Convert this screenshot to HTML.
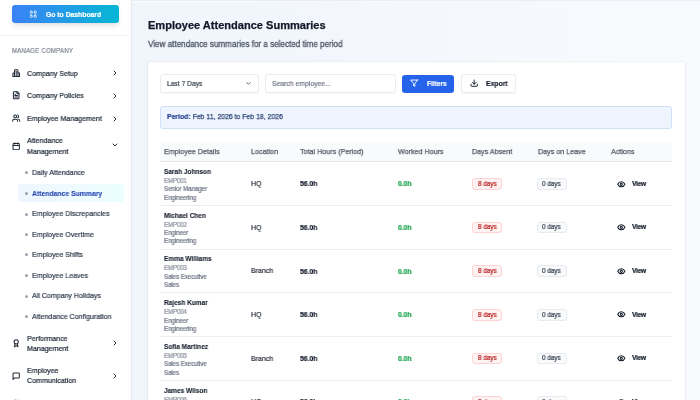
<!DOCTYPE html>
<html><head><meta charset="utf-8"><style>
html,body{margin:0;padding:0;}
body{width:700px;height:400px;overflow:hidden;position:relative;font-family:"Liberation Sans",sans-serif;background:linear-gradient(90deg,#eff5fc 0%,#f3f7fd 50%,#f8fafd 100%);}
.t{position:absolute;white-space:nowrap;will-change:transform;}
.ic{position:absolute;display:block;}
.box{position:absolute;box-sizing:border-box;}
</style></head><body>
<div class="box" style="left:0;top:0;width:131.6px;height:400px;background:#fff;border-right:1px solid #e6e9ef;"></div>
<div class="box" style="left:12px;top:5px;width:106.5px;height:17.7px;border-radius:3px;background:linear-gradient(90deg,#3b82f6,#06b6d4);box-shadow:0 4px 6px -1px rgba(0,0,0,0.09),0 2px 4px -2px rgba(0,0,0,0.09);"></div>
<svg class="ic" style="left:29.00px;top:9.70px;width:8.6px;height:8.6px;" viewBox="0 0 24 24" fill="none" stroke="#fff" stroke-width="2.3" stroke-linecap="round" stroke-linejoin="round"><rect x="3.5" y="3.5" width="6" height="6" rx="2.2"/><rect x="14.5" y="3.5" width="6" height="6" rx="2.2"/><rect x="14.5" y="14.5" width="6" height="6" rx="2.2"/><rect x="3.5" y="14.5" width="6" height="6" rx="2.2"/></svg>
<div class="t" style="left:45.60px;top:10.99px;font-size:6.8px;line-height:8.5px;color:#fff;font-weight:bold;-webkit-text-stroke:0.18px #fff;">Go to Dashboard</div>
<div class="box" style="left:0;top:35px;width:128px;height:1px;background:#f1f2f5;"></div>
<div class="box" style="left:132px;top:0;width:568px;height:1px;background:#ebeef5;"></div>
<div class="box" style="left:132px;top:1px;width:568px;height:2px;background:#f6f9fe;"></div>
<div class="t" style="left:12.40px;top:47.10px;font-size:6.9px;line-height:8.62px;color:#6b7280;font-weight:normal;-webkit-text-stroke:0.12px #6b7280;letter-spacing:0.3px;transform:scaleX(0.8696);transform-origin:0 0;">MANAGE COMPANY</div>
<svg class="ic" style="left:12.20px;top:68.80px;width:8.4px;height:8.4px;" viewBox="0 0 24 24" fill="none" stroke="#1f2937" stroke-width="2.9" stroke-linecap="round" stroke-linejoin="round"><path d="M7 21V4.5a2.5 2.5 0 0 1 2.5-2.5h5a2.5 2.5 0 0 1 2.5 2.5V21"/><path d="M12 6.5v12"/><path d="M7 11.5H5a2.5 2.5 0 0 0-2.5 2.5v7.5h19V13a2.5 2.5 0 0 0-2.5-2.5H17"/></svg>
<div class="t" style="left:26.50px;top:68.91px;font-size:7.81px;line-height:9.76px;color:#1f2937;font-weight:normal;-webkit-text-stroke:0.24px #1f2937;transform:scaleX(0.9091);transform-origin:0 0;">Company Setup</div>
<svg class="ic" style="left:110.50px;top:69.10px;width:8px;height:8px;" viewBox="0 0 24 24" fill="none" stroke="#1f2937" stroke-width="2.9" stroke-linecap="round" stroke-linejoin="round"><path d="m9 18 6-6-6-6"/></svg>
<svg class="ic" style="left:12.20px;top:91.40px;width:8.4px;height:8.4px;" viewBox="0 0 24 24" fill="none" stroke="#1f2937" stroke-width="2.9" stroke-linecap="round" stroke-linejoin="round"><path d="M15 2H6a2 2 0 0 0-2 2v16a2 2 0 0 0 2 2h12a2 2 0 0 0 2-2V7Z"/><path d="M14 2v4a2 2 0 0 0 2 2h4"/><path d="M10 9H8"/><path d="M16 13H8"/><path d="M16 17H8"/></svg>
<div class="t" style="left:26.50px;top:91.21px;font-size:7.81px;line-height:9.76px;color:#1f2937;font-weight:normal;-webkit-text-stroke:0.24px #1f2937;transform:scaleX(0.9091);transform-origin:0 0;">Company Policies</div>
<svg class="ic" style="left:110.50px;top:91.50px;width:8px;height:8px;" viewBox="0 0 24 24" fill="none" stroke="#1f2937" stroke-width="2.9" stroke-linecap="round" stroke-linejoin="round"><path d="m9 18 6-6-6-6"/></svg>
<svg class="ic" style="left:12.20px;top:114.30px;width:8.4px;height:8.4px;" viewBox="0 0 24 24" fill="none" stroke="#1f2937" stroke-width="2.9" stroke-linecap="round" stroke-linejoin="round"><path d="M16 21v-2a4 4 0 0 0-4-4H6a4 4 0 0 0-4 4v2"/><circle cx="9" cy="7" r="4"/><path d="M22 21v-2a4 4 0 0 0-3-3.87"/><path d="M16 3.13a4 4 0 0 1 0 7.75"/></svg>
<div class="t" style="left:26.50px;top:114.21px;font-size:7.81px;line-height:9.76px;color:#1f2937;font-weight:normal;-webkit-text-stroke:0.24px #1f2937;transform:scaleX(0.9091);transform-origin:0 0;">Employee Management</div>
<svg class="ic" style="left:110.50px;top:114.50px;width:8px;height:8px;" viewBox="0 0 24 24" fill="none" stroke="#1f2937" stroke-width="2.9" stroke-linecap="round" stroke-linejoin="round"><path d="m9 18 6-6-6-6"/></svg>
<svg class="ic" style="left:12.20px;top:142.10px;width:8.4px;height:8.4px;" viewBox="0 0 24 24" fill="none" stroke="#1f2937" stroke-width="2.9" stroke-linecap="round" stroke-linejoin="round"><rect width="18" height="18" x="3" y="4" rx="2"/><path d="M16 2v4"/><path d="M8 2v4"/><path d="M3 10h18"/></svg>
<div class="t" style="left:26.50px;top:136.41px;font-size:7.81px;line-height:9.76px;color:#1f2937;font-weight:normal;-webkit-text-stroke:0.24px #1f2937;transform:scaleX(0.9091);transform-origin:0 0;">Attendance</div>
<div class="t" style="left:26.50px;top:146.71px;font-size:7.81px;line-height:9.76px;color:#1f2937;font-weight:normal;-webkit-text-stroke:0.24px #1f2937;transform:scaleX(0.9091);transform-origin:0 0;">Management</div>
<svg class="ic" style="left:110.50px;top:141.40px;width:8px;height:8px;" viewBox="0 0 24 24" fill="none" stroke="#1f2937" stroke-width="2.9" stroke-linecap="round" stroke-linejoin="round"><path d="m6 9 6 6 6-6"/></svg>
<svg class="ic" style="left:12.20px;top:339.30px;width:8.4px;height:8.4px;" viewBox="0 0 24 24" fill="none" stroke="#1f2937" stroke-width="2.9" stroke-linecap="round" stroke-linejoin="round"><circle cx="12" cy="8" r="6"/><path d="M15.477 12.89 17 22l-5-3-5 3 1.523-9.11"/></svg>
<div class="t" style="left:26.50px;top:333.61px;font-size:7.81px;line-height:9.76px;color:#1f2937;font-weight:normal;-webkit-text-stroke:0.24px #1f2937;transform:scaleX(0.9091);transform-origin:0 0;">Performance</div>
<div class="t" style="left:26.50px;top:343.61px;font-size:7.81px;line-height:9.76px;color:#1f2937;font-weight:normal;-webkit-text-stroke:0.24px #1f2937;transform:scaleX(0.9091);transform-origin:0 0;">Management</div>
<svg class="ic" style="left:110.50px;top:339.00px;width:8px;height:8px;" viewBox="0 0 24 24" fill="none" stroke="#1f2937" stroke-width="2.9" stroke-linecap="round" stroke-linejoin="round"><path d="m9 18 6-6-6-6"/></svg>
<svg class="ic" style="left:12.20px;top:371.80px;width:8.4px;height:8.4px;" viewBox="0 0 24 24" fill="none" stroke="#1f2937" stroke-width="2.9" stroke-linecap="round" stroke-linejoin="round"><path d="M21 15a2 2 0 0 1-2 2H7l-4 4V5a2 2 0 0 1 2-2h14a2 2 0 0 1 2 2z"/></svg>
<div class="t" style="left:26.50px;top:366.11px;font-size:7.81px;line-height:9.76px;color:#1f2937;font-weight:normal;-webkit-text-stroke:0.24px #1f2937;transform:scaleX(0.9091);transform-origin:0 0;">Employee</div>
<div class="t" style="left:26.50px;top:376.31px;font-size:7.81px;line-height:9.76px;color:#1f2937;font-weight:normal;-webkit-text-stroke:0.24px #1f2937;transform:scaleX(0.9091);transform-origin:0 0;">Communication</div>
<svg class="ic" style="left:110.50px;top:372.00px;width:8px;height:8px;" viewBox="0 0 24 24" fill="none" stroke="#1f2937" stroke-width="2.9" stroke-linecap="round" stroke-linejoin="round"><path d="m9 18 6-6-6-6"/></svg>
<svg class="ic" style="left:12.20px;top:399.40px;width:8.4px;height:8.4px;" viewBox="0 0 24 24" fill="none" stroke="#1f2937" stroke-width="2.3" stroke-linecap="round" stroke-linejoin="round"><path d="M16 21v-2a4 4 0 0 0-4-4H6a4 4 0 0 0-4 4v2"/><circle cx="9" cy="7" r="4"/><path d="M22 21v-2a4 4 0 0 0-3-3.87"/><path d="M16 3.13a4 4 0 0 1 0 7.75"/></svg>
<div class="box" style="left:18px;top:183.8px;width:106.4px;height:18px;border-radius:3px;background:linear-gradient(90deg,#eff6ff,#ecfeff);"></div>
<div class="box" style="left:24.5px;top:171.10px;width:3px;height:3px;border-radius:50%;background:#9ca3af;"></div>
<div class="t" style="left:31.60px;top:168.07px;font-size:7.755px;line-height:9.69px;color:#374151;font-weight:normal;-webkit-text-stroke:0.24px #374151;transform:scaleX(0.9091);transform-origin:0 0;">Daily Attendance</div>
<div class="box" style="left:24.5px;top:192.10px;width:3px;height:3px;border-radius:50%;background:#9ca3af;"></div>
<div class="t" style="left:31.60px;top:189.28px;font-size:7.535px;line-height:9.42px;color:#1e40af;font-weight:bold;-webkit-text-stroke:0.05px #1e40af;transform:scaleX(0.9091);transform-origin:0 0;">Attendance Summary</div>
<div class="box" style="left:24.5px;top:212.50px;width:3px;height:3px;border-radius:50%;background:#9ca3af;"></div>
<div class="t" style="left:31.60px;top:209.47px;font-size:7.755px;line-height:9.69px;color:#374151;font-weight:normal;-webkit-text-stroke:0.24px #374151;transform:scaleX(0.9091);transform-origin:0 0;">Employee Discrepancies</div>
<div class="box" style="left:24.5px;top:233.00px;width:3px;height:3px;border-radius:50%;background:#9ca3af;"></div>
<div class="t" style="left:31.60px;top:229.97px;font-size:7.755px;line-height:9.69px;color:#374151;font-weight:normal;-webkit-text-stroke:0.24px #374151;transform:scaleX(0.9091);transform-origin:0 0;">Employee Overtime</div>
<div class="box" style="left:24.5px;top:253.40px;width:3px;height:3px;border-radius:50%;background:#9ca3af;"></div>
<div class="t" style="left:31.60px;top:250.37px;font-size:7.755px;line-height:9.69px;color:#374151;font-weight:normal;-webkit-text-stroke:0.24px #374151;transform:scaleX(0.9091);transform-origin:0 0;">Employee Shifts</div>
<div class="box" style="left:24.5px;top:273.80px;width:3px;height:3px;border-radius:50%;background:#9ca3af;"></div>
<div class="t" style="left:31.60px;top:270.77px;font-size:7.755px;line-height:9.69px;color:#374151;font-weight:normal;-webkit-text-stroke:0.24px #374151;transform:scaleX(0.9091);transform-origin:0 0;">Employee Leaves</div>
<div class="box" style="left:24.5px;top:294.50px;width:3px;height:3px;border-radius:50%;background:#9ca3af;"></div>
<div class="t" style="left:31.60px;top:291.47px;font-size:7.755px;line-height:9.69px;color:#374151;font-weight:normal;-webkit-text-stroke:0.24px #374151;transform:scaleX(0.9091);transform-origin:0 0;">All Company Holidays</div>
<div class="box" style="left:24.5px;top:314.90px;width:3px;height:3px;border-radius:50%;background:#9ca3af;"></div>
<div class="t" style="left:31.60px;top:311.87px;font-size:7.755px;line-height:9.69px;color:#374151;font-weight:normal;-webkit-text-stroke:0.24px #374151;transform:scaleX(0.9091);transform-origin:0 0;">Attendance Configuration</div>
<div class="t" style="left:147.90px;top:18.87px;font-size:11.05px;line-height:13.81px;color:#111827;font-weight:bold;-webkit-text-stroke:0.25px #111827;">Employee Attendance Summaries</div>
<div class="t" style="left:147.70px;top:38.80px;font-size:8.748px;line-height:10.93px;color:#4b5563;font-weight:normal;-webkit-text-stroke:0.3px #4b5563;transform:scaleX(0.9259);transform-origin:0 0;">View attendance summaries for a selected time period</div>
<div class="box" style="left:147.8px;top:62.2px;width:537px;height:360px;background:#fff;border-radius:3px;box-shadow:0 0 0 0.6px rgba(15,23,42,0.05),0 1px 3px rgba(15,23,42,0.08);"></div>
<div class="box" style="left:160px;top:74px;width:99px;height:19px;border:1px solid #eaecef;border-radius:3px;background:#fff;box-shadow:0 1px 1.5px rgba(0,0,0,0.04);"></div>
<div class="t" style="left:166.60px;top:79.17px;font-size:7.236px;line-height:9.04px;color:#1f2937;font-weight:normal;-webkit-text-stroke:0.15px #1f2937;transform:scaleX(0.9259);transform-origin:0 0;">Last 7 Days</div>
<svg class="ic" style="left:244.50px;top:80.00px;width:7px;height:7px;" viewBox="0 0 24 24" fill="none" stroke="#374151" stroke-width="2.6" stroke-linecap="round" stroke-linejoin="round"><path d="m6 9 6 6 6-6"/></svg>
<div class="box" style="left:265px;top:74px;width:131px;height:19px;border:1px solid #eaecef;border-radius:3px;background:#fff;box-shadow:0 1px 1.5px rgba(0,0,0,0.04);"></div>
<div class="t" style="left:271.50px;top:79.01px;font-size:7.398px;line-height:9.25px;color:#6b7280;font-weight:normal;-webkit-text-stroke:0.18px #6b7280;transform:scaleX(0.9259);transform-origin:0 0;">Search employee...</div>
<div class="box" style="left:402.3px;top:74.5px;width:52.2px;height:18.4px;border-radius:3px;background:#2563eb;"></div>
<svg class="ic" style="left:410.30px;top:79.20px;width:8.4px;height:8.4px;" viewBox="0 0 24 24" fill="none" stroke="#fff" stroke-width="2.7" stroke-linecap="round" stroke-linejoin="round"><polygon points="22 3 2 3 10 12.46 10 19 14 21 14 12.46 22 3"/></svg>
<div class="t" style="left:427.00px;top:79.68px;font-size:7.02px;line-height:8.77px;color:#fff;font-weight:bold;-webkit-text-stroke:0.18px #fff;transform:scaleX(0.9259);transform-origin:0 0;">Filters</div>
<div class="box" style="left:461px;top:74px;width:55px;height:19px;border:1px solid #eaecef;border-radius:3px;background:#fff;box-shadow:0 1px 1.5px rgba(0,0,0,0.05);"></div>
<svg class="ic" style="left:469.50px;top:79.40px;width:8.4px;height:8.4px;" viewBox="0 0 24 24" fill="none" stroke="#111827" stroke-width="2.7" stroke-linecap="round" stroke-linejoin="round"><path d="M21 15v4a2 2 0 0 1-2 2H5a2 2 0 0 1-2-2v-4"/><polyline points="7 10 12 15 17 10"/><line x1="12" x2="12" y1="15" y2="3"/></svg>
<div class="t" style="left:486.00px;top:79.37px;font-size:7.344px;line-height:9.18px;color:#111827;font-weight:bold;-webkit-text-stroke:0.18px #111827;transform:scaleX(0.9259);transform-origin:0 0;">Export</div>
<div class="box" style="left:160.3px;top:105.5px;width:511.7px;height:23px;border:1px solid #cfe0f8;border-radius:3px;background:#eff5fe;"></div>
<div class="t" style="left:166.80px;top:112.36px;font-size:7.452px;line-height:9.31px;color:#2b3f73;font-weight:normal;-webkit-text-stroke:0.25px #2b3f73;transform:scaleX(0.9259);transform-origin:0 0;"><b style="color:#1e3a8a;-webkit-text-stroke:0.18px #1e3a8a">Period:</b> Feb 11, 2026 to Feb 18, 2026</div>
<div class="box" style="left:160.2px;top:141.8px;width:511.8px;height:20.4px;background:#f9fafb;border-bottom:1px solid #e5e7eb;"></div>
<div class="t" style="left:164.40px;top:146.90px;font-size:7.722px;line-height:9.65px;color:#525a67;font-weight:normal;-webkit-text-stroke:0.25px #525a67;transform:scaleX(0.9259);transform-origin:0 0;">Employee Details</div>
<div class="t" style="left:250.80px;top:146.90px;font-size:7.722px;line-height:9.65px;color:#525a67;font-weight:normal;-webkit-text-stroke:0.25px #525a67;transform:scaleX(0.9259);transform-origin:0 0;">Location</div>
<div class="t" style="left:299.50px;top:146.90px;font-size:7.722px;line-height:9.65px;color:#525a67;font-weight:normal;-webkit-text-stroke:0.25px #525a67;transform:scaleX(0.9259);transform-origin:0 0;">Total Hours (Period)</div>
<div class="t" style="left:397.60px;top:146.90px;font-size:7.722px;line-height:9.65px;color:#525a67;font-weight:normal;-webkit-text-stroke:0.25px #525a67;transform:scaleX(0.9259);transform-origin:0 0;">Worked Hours</div>
<div class="t" style="left:472.40px;top:146.90px;font-size:7.722px;line-height:9.65px;color:#525a67;font-weight:normal;-webkit-text-stroke:0.25px #525a67;transform:scaleX(0.9259);transform-origin:0 0;">Days Absent</div>
<div class="t" style="left:537.70px;top:146.90px;font-size:7.722px;line-height:9.65px;color:#525a67;font-weight:normal;-webkit-text-stroke:0.25px #525a67;transform:scaleX(0.9259);transform-origin:0 0;">Days on Leave</div>
<div class="t" style="left:611.30px;top:146.90px;font-size:7.722px;line-height:9.65px;color:#525a67;font-weight:normal;-webkit-text-stroke:0.25px #525a67;transform:scaleX(0.9259);transform-origin:0 0;">Actions</div>
<div class="box" style="left:160.2px;top:204.95px;width:511.8px;height:1px;background:#edf0f3;"></div>
<div class="t" style="left:164.40px;top:167.98px;font-size:7.02px;line-height:8.77px;color:#111827;font-weight:bold;-webkit-text-stroke:0.08px #111827;transform:scaleX(0.9259);transform-origin:0 0;">Sarah Johnson</div>
<div class="t" style="left:164.40px;top:176.99px;font-size:6.804px;line-height:8.51px;color:#8b929e;font-weight:normal;-webkit-text-stroke:0.2px #8b929e;letter-spacing:-0.25px;transform:scaleX(0.9259);transform-origin:0 0;">EMP001</div>
<div class="t" style="left:164.40px;top:185.39px;font-size:6.804px;line-height:8.51px;color:#6b7280;font-weight:normal;-webkit-text-stroke:0.2px #6b7280;letter-spacing:-0.15px;transform:scaleX(0.9259);transform-origin:0 0;">Senior Manager</div>
<div class="t" style="left:164.40px;top:193.59px;font-size:6.804px;line-height:8.51px;color:#6b7280;font-weight:normal;-webkit-text-stroke:0.2px #6b7280;letter-spacing:-0.15px;transform:scaleX(0.9259);transform-origin:0 0;">Engineering</div>
<div class="t" style="left:250.80px;top:179.16px;font-size:7.56px;line-height:9.45px;color:#111827;font-weight:normal;-webkit-text-stroke:0.15px #111827;transform:scaleX(0.9259);transform-origin:0 0;">HQ</div>
<div class="t" style="left:299.50px;top:179.37px;font-size:7.344px;line-height:9.18px;color:#111827;font-weight:bold;-webkit-text-stroke:0.18px #111827;transform:scaleX(0.9259);transform-origin:0 0;">56.0h</div>
<div class="t" style="left:397.60px;top:179.37px;font-size:7.344px;line-height:9.18px;color:#16a34a;font-weight:bold;-webkit-text-stroke:0.18px #16a34a;transform:scaleX(0.9259);transform-origin:0 0;">0.0h</div>
<div class="box" style="left:472px;top:178.20px;width:29.8px;height:11.6px;border:1px solid #fdd3d3;border-radius:3px;background:#fef2f2;"></div>
<div class="t" style="left:477.60px;top:179.89px;font-size:6.804px;line-height:8.51px;color:#b91c1c;font-weight:normal;-webkit-text-stroke:0.22px #b91c1c;transform:scaleX(0.9259);transform-origin:0 0;">8 days</div>
<div class="box" style="left:537px;top:178.20px;width:29.6px;height:11.6px;border:1px solid #e8eaee;border-radius:3px;background:#f9fafb;"></div>
<div class="t" style="left:542.40px;top:179.89px;font-size:6.804px;line-height:8.51px;color:#374151;font-weight:normal;-webkit-text-stroke:0.22px #374151;transform:scaleX(0.9259);transform-origin:0 0;">0 days</div>
<svg class="ic" style="left:617.20px;top:179.70px;width:8.6px;height:8.6px;" viewBox="0 0 24 24" fill="none" stroke="#111827" stroke-width="2.9" stroke-linecap="round" stroke-linejoin="round"><path d="M2 12s3-7 10-7 10 7 10 7-3 7-10 7-10-7-10-7Z"/><circle cx="12" cy="12" r="3"/></svg>
<div class="t" style="left:631.60px;top:179.88px;font-size:7.02px;line-height:8.77px;color:#111827;font-weight:bold;-webkit-text-stroke:0.18px #111827;letter-spacing:-0.2px;transform:scaleX(0.9259);transform-origin:0 0;">View</div>
<div class="box" style="left:160.2px;top:248.70px;width:511.8px;height:1px;background:#edf0f3;"></div>
<div class="t" style="left:164.40px;top:211.73px;font-size:7.02px;line-height:8.77px;color:#111827;font-weight:bold;-webkit-text-stroke:0.08px #111827;transform:scaleX(0.9259);transform-origin:0 0;">Michael Chen</div>
<div class="t" style="left:164.40px;top:220.74px;font-size:6.804px;line-height:8.51px;color:#8b929e;font-weight:normal;-webkit-text-stroke:0.2px #8b929e;letter-spacing:-0.25px;transform:scaleX(0.9259);transform-origin:0 0;">EMP002</div>
<div class="t" style="left:164.40px;top:229.14px;font-size:6.804px;line-height:8.51px;color:#6b7280;font-weight:normal;-webkit-text-stroke:0.2px #6b7280;letter-spacing:-0.15px;transform:scaleX(0.9259);transform-origin:0 0;">Engineer</div>
<div class="t" style="left:164.40px;top:237.34px;font-size:6.804px;line-height:8.51px;color:#6b7280;font-weight:normal;-webkit-text-stroke:0.2px #6b7280;letter-spacing:-0.15px;transform:scaleX(0.9259);transform-origin:0 0;">Engineering</div>
<div class="t" style="left:250.80px;top:222.75px;font-size:7.56px;line-height:9.45px;color:#111827;font-weight:normal;-webkit-text-stroke:0.15px #111827;transform:scaleX(0.9259);transform-origin:0 0;">HQ</div>
<div class="t" style="left:299.50px;top:222.96px;font-size:7.344px;line-height:9.18px;color:#111827;font-weight:bold;-webkit-text-stroke:0.18px #111827;transform:scaleX(0.9259);transform-origin:0 0;">56.0h</div>
<div class="t" style="left:397.60px;top:222.96px;font-size:7.344px;line-height:9.18px;color:#16a34a;font-weight:bold;-webkit-text-stroke:0.18px #16a34a;transform:scaleX(0.9259);transform-origin:0 0;">0.0h</div>
<div class="box" style="left:472px;top:221.79px;width:29.8px;height:11.6px;border:1px solid #fdd3d3;border-radius:3px;background:#fef2f2;"></div>
<div class="t" style="left:477.60px;top:223.48px;font-size:6.804px;line-height:8.51px;color:#b91c1c;font-weight:normal;-webkit-text-stroke:0.22px #b91c1c;transform:scaleX(0.9259);transform-origin:0 0;">8 days</div>
<div class="box" style="left:537px;top:221.79px;width:29.6px;height:11.6px;border:1px solid #e8eaee;border-radius:3px;background:#f9fafb;"></div>
<div class="t" style="left:542.40px;top:223.48px;font-size:6.804px;line-height:8.51px;color:#374151;font-weight:normal;-webkit-text-stroke:0.22px #374151;transform:scaleX(0.9259);transform-origin:0 0;">0 days</div>
<svg class="ic" style="left:617.20px;top:223.29px;width:8.6px;height:8.6px;" viewBox="0 0 24 24" fill="none" stroke="#111827" stroke-width="2.9" stroke-linecap="round" stroke-linejoin="round"><path d="M2 12s3-7 10-7 10 7 10 7-3 7-10 7-10-7-10-7Z"/><circle cx="12" cy="12" r="3"/></svg>
<div class="t" style="left:631.60px;top:223.47px;font-size:7.02px;line-height:8.77px;color:#111827;font-weight:bold;-webkit-text-stroke:0.18px #111827;letter-spacing:-0.2px;transform:scaleX(0.9259);transform-origin:0 0;">View</div>
<div class="box" style="left:160.2px;top:292.45px;width:511.8px;height:1px;background:#edf0f3;"></div>
<div class="t" style="left:164.40px;top:255.48px;font-size:7.02px;line-height:8.77px;color:#111827;font-weight:bold;-webkit-text-stroke:0.08px #111827;transform:scaleX(0.9259);transform-origin:0 0;">Emma Williams</div>
<div class="t" style="left:164.40px;top:264.49px;font-size:6.804px;line-height:8.51px;color:#8b929e;font-weight:normal;-webkit-text-stroke:0.2px #8b929e;letter-spacing:-0.25px;transform:scaleX(0.9259);transform-origin:0 0;">EMP003</div>
<div class="t" style="left:164.40px;top:272.89px;font-size:6.804px;line-height:8.51px;color:#6b7280;font-weight:normal;-webkit-text-stroke:0.2px #6b7280;letter-spacing:-0.15px;transform:scaleX(0.9259);transform-origin:0 0;">Sales Executive</div>
<div class="t" style="left:164.40px;top:281.09px;font-size:6.804px;line-height:8.51px;color:#6b7280;font-weight:normal;-webkit-text-stroke:0.2px #6b7280;letter-spacing:-0.15px;transform:scaleX(0.9259);transform-origin:0 0;">Sales</div>
<div class="t" style="left:250.80px;top:266.34px;font-size:7.56px;line-height:9.45px;color:#111827;font-weight:normal;-webkit-text-stroke:0.15px #111827;transform:scaleX(0.9259);transform-origin:0 0;">Branch</div>
<div class="t" style="left:299.50px;top:266.55px;font-size:7.344px;line-height:9.18px;color:#111827;font-weight:bold;-webkit-text-stroke:0.18px #111827;transform:scaleX(0.9259);transform-origin:0 0;">56.0h</div>
<div class="t" style="left:397.60px;top:266.55px;font-size:7.344px;line-height:9.18px;color:#16a34a;font-weight:bold;-webkit-text-stroke:0.18px #16a34a;transform:scaleX(0.9259);transform-origin:0 0;">0.0h</div>
<div class="box" style="left:472px;top:265.38px;width:29.8px;height:11.6px;border:1px solid #fdd3d3;border-radius:3px;background:#fef2f2;"></div>
<div class="t" style="left:477.60px;top:267.07px;font-size:6.804px;line-height:8.51px;color:#b91c1c;font-weight:normal;-webkit-text-stroke:0.22px #b91c1c;transform:scaleX(0.9259);transform-origin:0 0;">8 days</div>
<div class="box" style="left:537px;top:265.38px;width:29.6px;height:11.6px;border:1px solid #e8eaee;border-radius:3px;background:#f9fafb;"></div>
<div class="t" style="left:542.40px;top:267.07px;font-size:6.804px;line-height:8.51px;color:#374151;font-weight:normal;-webkit-text-stroke:0.22px #374151;transform:scaleX(0.9259);transform-origin:0 0;">0 days</div>
<svg class="ic" style="left:617.20px;top:266.88px;width:8.6px;height:8.6px;" viewBox="0 0 24 24" fill="none" stroke="#111827" stroke-width="2.9" stroke-linecap="round" stroke-linejoin="round"><path d="M2 12s3-7 10-7 10 7 10 7-3 7-10 7-10-7-10-7Z"/><circle cx="12" cy="12" r="3"/></svg>
<div class="t" style="left:631.60px;top:267.06px;font-size:7.02px;line-height:8.77px;color:#111827;font-weight:bold;-webkit-text-stroke:0.18px #111827;letter-spacing:-0.2px;transform:scaleX(0.9259);transform-origin:0 0;">View</div>
<div class="box" style="left:160.2px;top:336.20px;width:511.8px;height:1px;background:#edf0f3;"></div>
<div class="t" style="left:164.40px;top:299.23px;font-size:7.02px;line-height:8.77px;color:#111827;font-weight:bold;-webkit-text-stroke:0.08px #111827;transform:scaleX(0.9259);transform-origin:0 0;">Rajesh Kumar</div>
<div class="t" style="left:164.40px;top:308.24px;font-size:6.804px;line-height:8.51px;color:#8b929e;font-weight:normal;-webkit-text-stroke:0.2px #8b929e;letter-spacing:-0.25px;transform:scaleX(0.9259);transform-origin:0 0;">EMP004</div>
<div class="t" style="left:164.40px;top:316.64px;font-size:6.804px;line-height:8.51px;color:#6b7280;font-weight:normal;-webkit-text-stroke:0.2px #6b7280;letter-spacing:-0.15px;transform:scaleX(0.9259);transform-origin:0 0;">Engineer</div>
<div class="t" style="left:164.40px;top:324.84px;font-size:6.804px;line-height:8.51px;color:#6b7280;font-weight:normal;-webkit-text-stroke:0.2px #6b7280;letter-spacing:-0.15px;transform:scaleX(0.9259);transform-origin:0 0;">Engineering</div>
<div class="t" style="left:250.80px;top:309.93px;font-size:7.56px;line-height:9.45px;color:#111827;font-weight:normal;-webkit-text-stroke:0.15px #111827;transform:scaleX(0.9259);transform-origin:0 0;">HQ</div>
<div class="t" style="left:299.50px;top:310.14px;font-size:7.344px;line-height:9.18px;color:#111827;font-weight:bold;-webkit-text-stroke:0.18px #111827;transform:scaleX(0.9259);transform-origin:0 0;">56.0h</div>
<div class="t" style="left:397.60px;top:310.14px;font-size:7.344px;line-height:9.18px;color:#16a34a;font-weight:bold;-webkit-text-stroke:0.18px #16a34a;transform:scaleX(0.9259);transform-origin:0 0;">0.0h</div>
<div class="box" style="left:472px;top:308.97px;width:29.8px;height:11.6px;border:1px solid #fdd3d3;border-radius:3px;background:#fef2f2;"></div>
<div class="t" style="left:477.60px;top:310.66px;font-size:6.804px;line-height:8.51px;color:#b91c1c;font-weight:normal;-webkit-text-stroke:0.22px #b91c1c;transform:scaleX(0.9259);transform-origin:0 0;">8 days</div>
<div class="box" style="left:537px;top:308.97px;width:29.6px;height:11.6px;border:1px solid #e8eaee;border-radius:3px;background:#f9fafb;"></div>
<div class="t" style="left:542.40px;top:310.66px;font-size:6.804px;line-height:8.51px;color:#374151;font-weight:normal;-webkit-text-stroke:0.22px #374151;transform:scaleX(0.9259);transform-origin:0 0;">0 days</div>
<svg class="ic" style="left:617.20px;top:310.47px;width:8.6px;height:8.6px;" viewBox="0 0 24 24" fill="none" stroke="#111827" stroke-width="2.9" stroke-linecap="round" stroke-linejoin="round"><path d="M2 12s3-7 10-7 10 7 10 7-3 7-10 7-10-7-10-7Z"/><circle cx="12" cy="12" r="3"/></svg>
<div class="t" style="left:631.60px;top:310.65px;font-size:7.02px;line-height:8.77px;color:#111827;font-weight:bold;-webkit-text-stroke:0.18px #111827;letter-spacing:-0.2px;transform:scaleX(0.9259);transform-origin:0 0;">View</div>
<div class="box" style="left:160.2px;top:379.95px;width:511.8px;height:1px;background:#edf0f3;"></div>
<div class="t" style="left:164.40px;top:342.98px;font-size:7.02px;line-height:8.77px;color:#111827;font-weight:bold;-webkit-text-stroke:0.08px #111827;transform:scaleX(0.9259);transform-origin:0 0;">Sofia Martinez</div>
<div class="t" style="left:164.40px;top:351.99px;font-size:6.804px;line-height:8.51px;color:#8b929e;font-weight:normal;-webkit-text-stroke:0.2px #8b929e;letter-spacing:-0.25px;transform:scaleX(0.9259);transform-origin:0 0;">EMP005</div>
<div class="t" style="left:164.40px;top:360.39px;font-size:6.804px;line-height:8.51px;color:#6b7280;font-weight:normal;-webkit-text-stroke:0.2px #6b7280;letter-spacing:-0.15px;transform:scaleX(0.9259);transform-origin:0 0;">Sales Executive</div>
<div class="t" style="left:164.40px;top:368.59px;font-size:6.804px;line-height:8.51px;color:#6b7280;font-weight:normal;-webkit-text-stroke:0.2px #6b7280;letter-spacing:-0.15px;transform:scaleX(0.9259);transform-origin:0 0;">Sales</div>
<div class="t" style="left:250.80px;top:353.52px;font-size:7.56px;line-height:9.45px;color:#111827;font-weight:normal;-webkit-text-stroke:0.15px #111827;transform:scaleX(0.9259);transform-origin:0 0;">Branch</div>
<div class="t" style="left:299.50px;top:353.73px;font-size:7.344px;line-height:9.18px;color:#111827;font-weight:bold;-webkit-text-stroke:0.18px #111827;transform:scaleX(0.9259);transform-origin:0 0;">56.0h</div>
<div class="t" style="left:397.60px;top:353.73px;font-size:7.344px;line-height:9.18px;color:#16a34a;font-weight:bold;-webkit-text-stroke:0.18px #16a34a;transform:scaleX(0.9259);transform-origin:0 0;">0.0h</div>
<div class="box" style="left:472px;top:352.56px;width:29.8px;height:11.6px;border:1px solid #fdd3d3;border-radius:3px;background:#fef2f2;"></div>
<div class="t" style="left:477.60px;top:354.25px;font-size:6.804px;line-height:8.51px;color:#b91c1c;font-weight:normal;-webkit-text-stroke:0.22px #b91c1c;transform:scaleX(0.9259);transform-origin:0 0;">8 days</div>
<div class="box" style="left:537px;top:352.56px;width:29.6px;height:11.6px;border:1px solid #e8eaee;border-radius:3px;background:#f9fafb;"></div>
<div class="t" style="left:542.40px;top:354.25px;font-size:6.804px;line-height:8.51px;color:#374151;font-weight:normal;-webkit-text-stroke:0.22px #374151;transform:scaleX(0.9259);transform-origin:0 0;">0 days</div>
<svg class="ic" style="left:617.20px;top:354.06px;width:8.6px;height:8.6px;" viewBox="0 0 24 24" fill="none" stroke="#111827" stroke-width="2.9" stroke-linecap="round" stroke-linejoin="round"><path d="M2 12s3-7 10-7 10 7 10 7-3 7-10 7-10-7-10-7Z"/><circle cx="12" cy="12" r="3"/></svg>
<div class="t" style="left:631.60px;top:354.24px;font-size:7.02px;line-height:8.77px;color:#111827;font-weight:bold;-webkit-text-stroke:0.18px #111827;letter-spacing:-0.2px;transform:scaleX(0.9259);transform-origin:0 0;">View</div>
<div class="box" style="left:160.2px;top:423.70px;width:511.8px;height:1px;background:#edf0f3;"></div>
<div class="t" style="left:164.40px;top:386.73px;font-size:7.02px;line-height:8.77px;color:#111827;font-weight:bold;-webkit-text-stroke:0.08px #111827;transform:scaleX(0.9259);transform-origin:0 0;">James Wilson</div>
<div class="t" style="left:164.40px;top:395.74px;font-size:6.804px;line-height:8.51px;color:#8b929e;font-weight:normal;-webkit-text-stroke:0.2px #8b929e;letter-spacing:-0.25px;transform:scaleX(0.9259);transform-origin:0 0;">EMP006</div>
<div class="t" style="left:164.40px;top:404.14px;font-size:6.804px;line-height:8.51px;color:#6b7280;font-weight:normal;-webkit-text-stroke:0.2px #6b7280;letter-spacing:-0.15px;transform:scaleX(0.9259);transform-origin:0 0;">Engineer</div>
<div class="t" style="left:164.40px;top:412.34px;font-size:6.804px;line-height:8.51px;color:#6b7280;font-weight:normal;-webkit-text-stroke:0.2px #6b7280;letter-spacing:-0.15px;transform:scaleX(0.9259);transform-origin:0 0;">Engineering</div>
<div class="t" style="left:250.80px;top:397.11px;font-size:7.56px;line-height:9.45px;color:#111827;font-weight:normal;-webkit-text-stroke:0.15px #111827;transform:scaleX(0.9259);transform-origin:0 0;">HQ</div>
<div class="t" style="left:299.50px;top:397.32px;font-size:7.344px;line-height:9.18px;color:#111827;font-weight:bold;-webkit-text-stroke:0.18px #111827;transform:scaleX(0.9259);transform-origin:0 0;">56.0h</div>
<div class="t" style="left:397.60px;top:397.32px;font-size:7.344px;line-height:9.18px;color:#16a34a;font-weight:bold;-webkit-text-stroke:0.18px #16a34a;transform:scaleX(0.9259);transform-origin:0 0;">0.0h</div>
<div class="box" style="left:472px;top:396.15px;width:29.8px;height:11.6px;border:1px solid #fdd3d3;border-radius:3px;background:#fef2f2;"></div>
<div class="t" style="left:477.60px;top:397.84px;font-size:6.804px;line-height:8.51px;color:#b91c1c;font-weight:normal;-webkit-text-stroke:0.22px #b91c1c;transform:scaleX(0.9259);transform-origin:0 0;">8 days</div>
<div class="box" style="left:537px;top:396.15px;width:29.6px;height:11.6px;border:1px solid #e8eaee;border-radius:3px;background:#f9fafb;"></div>
<div class="t" style="left:542.40px;top:397.84px;font-size:6.804px;line-height:8.51px;color:#374151;font-weight:normal;-webkit-text-stroke:0.22px #374151;transform:scaleX(0.9259);transform-origin:0 0;">0 days</div>
<svg class="ic" style="left:617.20px;top:397.65px;width:8.6px;height:8.6px;" viewBox="0 0 24 24" fill="none" stroke="#111827" stroke-width="2.9" stroke-linecap="round" stroke-linejoin="round"><path d="M2 12s3-7 10-7 10 7 10 7-3 7-10 7-10-7-10-7Z"/><circle cx="12" cy="12" r="3"/></svg>
<div class="t" style="left:631.60px;top:397.83px;font-size:7.02px;line-height:8.77px;color:#111827;font-weight:bold;-webkit-text-stroke:0.18px #111827;letter-spacing:-0.2px;transform:scaleX(0.9259);transform-origin:0 0;">View</div>
</body></html>
